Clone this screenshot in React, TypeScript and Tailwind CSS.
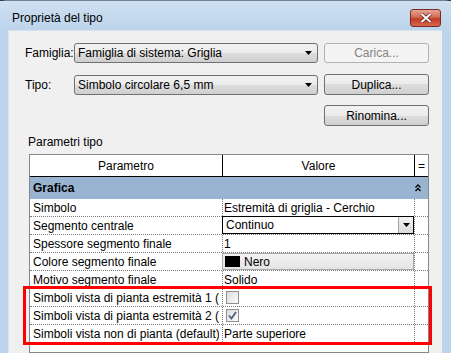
import React from "react";

type Row = {
  p: string;
  kind?: "text" | "combo" | "color" | "check";
  v?: string;
  checked?: boolean;
};

const rows: Row[] = [
  { p: "Simbolo", v: "Estremità di griglia - Cerchio" },
  { p: "Segmento centrale", kind: "combo", v: "Continuo" },
  { p: "Spessore segmento finale", v: "1" },
  { p: "Colore segmento finale", kind: "color", v: "Nero" },
  { p: "Motivo segmento finale", v: "Solido" },
  { p: "Simboli vista di pianta estremità 1 (default)", kind: "check", checked: false },
  { p: "Simboli vista di pianta estremità 2 (default)", kind: "check", checked: true },
  { p: "Simboli vista non di pianta (default)", v: "Parte superiore" },
];

function Arrow() {
  return (
    <svg width="7" height="4" viewBox="0 0 7 4">
      <path d="M0 0h7L3.5 4z" fill="#000" />
    </svg>
  );
}

function Combo({ text }: { text: string }) {
  return (
    <div className="w-[244px] h-[20px] flex items-center justify-between pl-[3px] pr-[5px] border border-[#707070] rounded-[3px] bg-[linear-gradient(#f2f2f2_0%,#ebebeb_50%,#dddddd_50%,#cfcfcf_100%)]">
      <span className="leading-[14px]">{text}</span>
      <Arrow />
    </div>
  );
}

function Btn({ text, disabled }: { text: string; disabled?: boolean }) {
  return (
    <div
      className={
        disabled
          ? "w-[105px] h-[20px] flex items-center justify-center border border-[#adb2b5] rounded-[3px] bg-[#f4f4f4] text-[#838383]"
          : "w-[105px] h-[21px] flex items-center justify-center border border-[#707070] rounded-[3px] bg-[linear-gradient(#f2f2f2_0%,#ebebeb_50%,#dddddd_50%,#cfcfcf_100%)]"
      }
    >
      {text}
    </div>
  );
}

function Check({ checked }: { checked?: boolean }) {
  return (
    <div className="w-[13px] h-[13px] border border-[#8f8f8f] bg-[linear-gradient(135deg,#dcdcdc,#fbfbfb)] flex items-center justify-center">
      {checked && (
        <svg width="9" height="9" viewBox="0 0 9 9">
          <path d="M1 4.5 3.5 7.5 8 1" fill="none" stroke="#4d6185" strokeWidth="1.8" />
        </svg>
      )}
    </div>
  );
}

function Value({ r }: { r: Row }) {
  if (r.kind === "combo") {
    return (
      <div className="h-[18px] -ml-[1px] -mt-[1px] bg-white border border-black flex items-center justify-between pl-[3px]">
        <span>{r.v}</span>
        <div className="w-[15px] h-full bg-[linear-gradient(#f4f4f4,#dcdcdc)] border-l border-[#a0a0a0] flex items-center justify-center">
          <Arrow />
        </div>
      </div>
    );
  }
  if (r.kind === "color") {
    return (
      <div className="h-[17px] -ml-[1px] bg-[linear-gradient(#f2f2f2,#e4e4e4)] border border-[#a8a8a8] flex items-center pl-[2px] gap-[4px]">
        <div className="w-[15px] h-[11px] bg-black" />
        <span>{r.v}</span>
      </div>
    );
  }
  if (r.kind === "check") {
    return (
      <div className="h-full flex items-center pl-[3px]">
        <Check checked={r.checked} />
      </div>
    );
  }
  return <div className="h-full flex items-center pl-[1px] whitespace-nowrap overflow-hidden">{r.v}</div>;
}

export default function App() {
  return (
    <div className="w-[451px] h-[353px] relative overflow-hidden bg-[#3b3b3b] font-['Liberation_Sans',Arial,sans-serif] text-[12px] text-black">
      <div className="h-full rounded-t-[6px] border-t border-[#6f8096] bg-[#bcd4ec] flex flex-col">
        <div className="h-[29px] flex items-start justify-between pl-[12px] pr-[10px] bg-[linear-gradient(#cfe0f2,#bcd4ec)]">
          <span className="pt-[10px] leading-[14px]">Proprietà del tipo</span>
          <div className="mt-[8px] w-[31px] h-[18px] rounded-[3px] border border-[#7a2a24] bg-[linear-gradient(#e8a493_0%,#d26a55_45%,#c23b25_55%,#d8684e_100%)] flex items-center justify-center">
            <svg width="12" height="10" viewBox="0 0 12 10">
              <path d="M1.5 1 10.5 9M10.5 1 1.5 9" stroke="#5a1a14" strokeWidth="3.4" />
              <path d="M1.5 1 10.5 9M10.5 1 1.5 9" stroke="#fff" strokeWidth="2" />
            </svg>
          </div>
        </div>

        <div className="flex-1 ml-[8px] mr-[9px] bg-[#f0f0f0] border-l border-t border-[#d6e2ef] pt-[11px] pl-[16px] flex flex-col">
          <div className="flex items-center h-[21px]">
            <span className="w-[49px] shrink-0">Famiglia:</span>
            <Combo text="Famiglia di sistema: Griglia" />
            <div className="ml-[6px] mt-[1px]">
              <Btn text="Carica..." disabled />
            </div>
          </div>
          <div className="flex items-center h-[21px] mt-[11px]">
            <span className="w-[49px] shrink-0">Tipo:</span>
            <Combo text="Simbolo circolare 6,5 mm" />
            <div className="ml-[6px]">
              <Btn text="Duplica..." />
            </div>
          </div>
          <div className="flex mt-[10px] pl-[299px]">
            <Btn text="Rinomina..." />
          </div>

          <div className="mt-[9px] pl-[3px] leading-[14px]">Parametri tipo</div>

          <div className="mt-[5px] ml-[4px] w-[400px] flex-1 border border-[#828790] bg-white flex flex-col">
            <div className="h-[22px] flex border-b border-black bg-white">
              <div className="w-[193px] border-r border-black flex items-center justify-center">Parametro</div>
              <div className="w-[192px] border-r border-black flex items-center justify-center">Valore</div>
              <div className="flex-1 flex items-center justify-center">=</div>
            </div>
            <div className="h-[22px] bg-[#99b4d1] flex items-center justify-between pl-[3px] pr-[7px] font-bold">
              <span>Grafica</span>
              <svg width="6" height="8" viewBox="0 0 6 8">
                <path d="M0.5 3.5 3 1 5.5 3.5M0.5 7 3 4.5 5.5 7" fill="none" stroke="#000" strokeWidth="1.3" />
              </svg>
            </div>
            {rows.map((r) => (
              <div key={r.p} className="h-[18px] flex border-b border-dotted border-[#7a7a7a]">
                <div className="w-[193px] border-r border-dotted border-[#7a7a7a] pl-[3px] pr-[3px] flex items-center">
                  <div className="w-full whitespace-nowrap overflow-hidden">{r.p}</div>
                </div>
                <div className="w-[192px] border-r border-dotted border-[#7a7a7a]">
                  <Value r={r} />
                </div>
                <div className="flex-1" />
              </div>
            ))}
          </div>
        </div>
      </div>

      <div className="absolute left-[23px] top-[286px] w-[409px] h-[59px] border-[3px] border-[#ff0000]" />
    </div>
  );
}
